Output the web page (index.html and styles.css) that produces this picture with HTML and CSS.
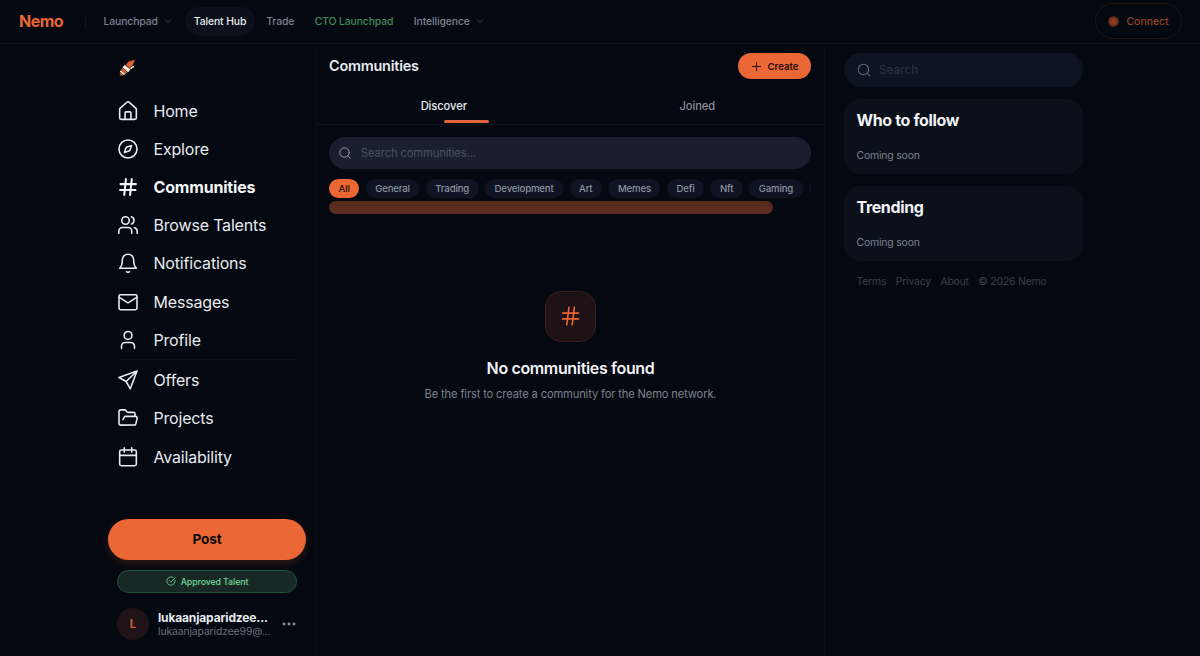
FILE: index.html
```
<!DOCTYPE html>
<html lang="en">

<head>
    <meta charset="UTF-8">
    <meta name="viewport" content="width=device-width, initial-scale=1.0">
    <title>Communities - Nemo</title>
    <link rel="stylesheet" href="styles.css">
</head>

<body>
    <header class="topbar">
        <a class="brand">Nemo</a>
        <span class="brand-line"></span>
        <nav class="topnav">
            <a class="top-link">Launchpad <svg class="chevron" viewBox="0 0 24 24"><path d="m6 9 6 6 6-6" /></svg></a>
            <a class="top-link active">Talent Hub</a>
            <a class="top-link">Trade</a>
            <a class="top-link green">CTO Launchpad</a>
            <a class="top-link">Intelligence <svg class="chevron" viewBox="0 0 24 24"><path d="m6 9 6 6 6-6" /></svg></a>
        </nav>
        <button class="connect"><span class="connect-dot"></span>Connect</button>
    </header>

    <div class="layout">
        <aside class="sidebar">
            <svg class="logo" viewBox="0 0 16 16">
                <path d="M7 5.500C8 2 11 .3 15.800.3 15 2.500 14.500 4.500 12 7L9 8Z" fill="#d9622f" />
                <path d="M.8 15.500 1 11.500 5 5.500 8 5 12.500 8.500 9 12 4 15.500Z" fill="#d9622f" />
                <path d="M3.500 7.200 5.800 5.300 11.500 9.600 9 12.300ZM.8 11.500 2.200 10.300 6.500 13.800 4.800 15ZM11 8 15.300 5.300 14.800 7.300 12 9.300Z" fill="#f6efec" />
                <path d="M3.300 7.300 8.800 12.500M2 10.200 6.300 14M6.500 5.200 12 9.200M.8 12.200 4.200 15.300" stroke="#1a1215" stroke-width=".6" />
            </svg>
            <nav class="menu">
                <a class="menu-item">
                    <svg class="icon" viewBox="0 0 24 24"><path d="M15.500 22v-8a1 1 0 0 0-1-1h-5a1 1 0 0 0-1 1v8" /><path d="M2 10a2 2 0 0 1 .709-1.528l8-7a2 2 0 0 1 2.582 0l8 7A2 2 0 0 1 22 10v10a2 2 0 0 1-2 2H4a2 2 0 0 1-2-2z" /></svg>
                    Home
                </a>
                <a class="menu-item">
                    <svg class="icon" viewBox="0 0 24 24"><circle cx="12" cy="12" r="10.800" /><path d="m16.240 7.760-1.804 5.411a2 2 0 0 1-1.265 1.265L7.760 16.240l1.804-5.411a2 2 0 0 1 1.265-1.265z" /></svg>
                    Explore
                </a>
                <a class="menu-item current">
                    <svg class="icon" viewBox="0 0 24 24"><path d="M3 8.500h18.500M2.500 15.500h18.500M9.500 2.500 7.500 21.500M16.500 2.500 14.500 21.500" /></svg>
                    Communities
                </a>
                <a class="menu-item">
                    <svg class="icon" viewBox="0 0 24 24"><path d="M16.500 22v-2.500a4.500 4.500 0 0 0-4.500-4.500H5.500a4.500 4.500 0 0 0-4.500 4.500V22" /><circle cx="9" cy="6.500" r="4.500" /><path d="M23 22v-2.500a4.500 4.500 0 0 0-3.300-4.300M16 2.200a4.500 4.500 0 0 1 0 8.600" /></svg>
                    Browse Talents
                </a>
                <a class="menu-item">
                    <svg class="icon" viewBox="0 0 24 24"><path d="M10.300 22.300a2 2 0 0 0 3.400 0" /><path d="M18.800 8.200a6.800 6.800 0 0 0-13.600 0C5.200 15.500 2 18.300 2 18.300h20s-3.200-2.800-3.200-10.100" /></svg>
                    Notifications
                </a>
                <a class="menu-item">
                    <svg class="icon" viewBox="0 0 24 24"><rect x="1.200" y="3.200" width="21.600" height="18" rx="2" /><path d="m1.500 6.500 10.500 6.500L22.500 6.500" /></svg>
                    Messages
                </a>
                <a class="menu-item">
                    <svg class="icon" viewBox="0 0 24 24"><path d="M19.800 22v-2.500a4.500 4.500 0 0 0-4.500-4.500H8.700a4.500 4.500 0 0 0-4.500 4.500V22" /><circle cx="12" cy="6.500" r="4.700" /></svg>
                    Profile
                </a>
                <hr class="menu-line">
                <a class="menu-item">
                    <svg class="icon" viewBox="0 0 24 24"><path d="M22.800 1.200 1.200 9l8.600 4.800 4.900 8.800zM22.800 1.200 9.800 13.800" /></svg>
                    Offers
                </a>
                <a class="menu-item">
                    <svg class="icon" viewBox="0 0 24 24"><path d="m6 14 1.500-2.900A2 2 0 0 1 9.240 10H21a2 2 0 0 1 1.940 2.500l-1.540 6.500a2 2 0 0 1-1.950 1.500H3.200a2 2 0 0 1-2-2V4.200a2 2 0 0 1 2-2h4.700a2 2 0 0 1 1.690.9l.81 1.200a2 2 0 0 0 1.670.9H18.500a2 2 0 0 1 2 2V10" /></svg>
                    Projects
                </a>
                <a class="menu-item">
                    <svg class="icon" viewBox="0 0 24 24"><path d="M7.500 1v5M16.500 1v5M2 10h20" /><rect x="2" y="3.500" width="20" height="19" rx="2" /></svg>
                    Availability
                </a>
            </nav>

            <button class="post">Post</button>
            <div class="approved">
                <svg viewBox="0 0 24 24"><path d="M21.800 10A10 10 0 1 1 17 3.335" /><path d="m8 11 4 4L22 4" /></svg>
                Approved Talent
            </div>
            <div class="account">
                <div class="avatar">L</div>
                <div class="account-text">
                    <div class="account-name">lukaanjaparidzee...</div>
                    <div class="account-mail">lukaanjaparidzee99@...</div>
                </div>
                <svg class="dots" viewBox="0 0 14 4"><circle cx="2" cy="2" r="1.400" /><circle cx="7" cy="2" r="1.400" /><circle cx="12" cy="2" r="1.400" /></svg>
            </div>
        </aside>

        <main class="main">
            <div class="main-head">
                <h1>Communities</h1>
                <button class="create"><svg viewBox="0 0 24 24"><path d="M3 12h18M12 3v18" /></svg>Create</button>
            </div>
            <div class="tabs">
                <div class="tab selected">Discover</div>
                <div class="tab">Joined</div>
            </div>
            <div class="filters">
                <div class="search">
                    <svg viewBox="0 0 24 24"><circle cx="11" cy="11" r="9.500" /><path d="m22.500 22.500-4.800-4.800" /></svg>
                    <span>Search communities...</span>
                </div>
                <div class="chips">
                    <span class="chip on">All</span>
                    <span class="chip">General</span>
                    <span class="chip">Trading</span>
                    <span class="chip">Development</span>
                    <span class="chip">Art</span>
                    <span class="chip">Memes</span>
                    <span class="chip">Defi</span>
                    <span class="chip">Nft</span>
                    <span class="chip">Gaming</span>
                    <span class="chip"></span>
                </div>
                <div class="scrollbar"></div>
            </div>
            <div class="empty">
                <div class="empty-icon">
                    <svg viewBox="0 0 24 24"><path d="M2 8.500h19M2 15.500h19M9.500 1.500 7 22.500M16 1.500 13.500 22.500" /></svg>
                </div>
                <h2>No communities found</h2>
                <p>Be the first to create a community for the Nemo network.</p>
            </div>
        </main>

        <aside class="right">
            <div class="side-search">
                <svg viewBox="0 0 24 24"><circle cx="11" cy="11" r="8.800" /><path d="m22 22-4.700-4.700" /></svg>
                <span>Search</span>
            </div>
            <section class="card">
                <h3>Who to follow</h3>
                <p>Coming soon</p>
            </section>
            <section class="card">
                <h3>Trending</h3>
                <p>Coming soon</p>
            </section>
            <footer class="links">
                <a>Terms</a>
                <a>Privacy</a>
                <a>About</a>
                <span>© 2026 Nemo</span>
            </footer>
        </aside>
    </div>
</body>

</html>
```
FILE: styles.css
```
* {
    box-sizing: border-box;
}

body {
    margin: 0;
    height: 100vh;
    overflow: hidden;
    background-color: #040810;
    color: #e8ebf0;
    font-family: Inter, "Liberation Sans", sans-serif;
}

h1,
h2,
h3,
p {
    margin: 0;
}

button {
    font-family: inherit;
    border: none;
    cursor: pointer;
}

svg {
    display: block;
    flex-shrink: 0;
    fill: none;
    stroke: currentColor;
    stroke-width: 2;
    stroke-linecap: round;
    stroke-linejoin: round;
}

/* top bar */
.topbar {
    height: 44px;
    display: flex;
    align-items: center;
    padding: 0 18.500px 1px 19px;
    border-bottom: 1px solid #0d1219;
}

.brand {
    width: 66px;
    font-size: 16px;
    font-weight: 700;
    letter-spacing: -0.5px;
    color: #ea6634;
}

.brand-line {
    width: 1px;
    height: 13px;
    background-color: #10151d;
}

.topnav {
    display: flex;
    align-items: center;
    gap: 1.500px;
    margin-left: 8px;
}

.top-link {
    height: 29px;
    display: flex;
    align-items: center;
    padding: 0 9.500px;
    border-radius: 15px;
    font-size: 10.400px;
    font-weight: 500;
    letter-spacing: -0.12px;
    color: #7d8390;
}

.top-link.active {
    padding: 0 9px;
    background-color: #0b101b;
    color: #e9ecf1;
}

.top-link.green {
    color: #418a59;
}

.chevron {
    width: 12px;
    height: 12px;
    margin-left: 4px;
    color: #373d47;
}

.connect {
    width: 87px;
    height: 36px;
    display: flex;
    align-items: center;
    gap: 8px;
    margin-left: auto;
    padding: 0 12px;
    border: 1px solid #26120f;
    border-radius: 18px;
    background: none;
    font-size: 10.400px;
    font-weight: 500;
    color: #9a4526;
}

.connect-dot {
    flex-shrink: 0;
    width: 11px;
    height: 11px;
    border-radius: 50%;
    background: radial-gradient(circle, #8b3b1d 35%, #3b1b14 75%);
}

/* three columns */
.layout {
    height: calc(100vh - 44px);
    display: grid;
    grid-template-columns: 208px 509px 258px;
    padding-left: 108px;
}

.sidebar {
    display: flex;
    flex-direction: column;
    padding: 16px 10px 0 0;
}

.logo {
    width: 16px;
    height: 16px;
    margin-left: 11px;
    stroke: none;
}

.menu {
    margin: 16px 0 0 9.500px;
}

.menu-item {
    height: 38.120px;
    display: flex;
    align-items: center;
    gap: 16px;
    font-size: 16px;
    letter-spacing: -0.18px;
}

.menu-item.current {
    font-weight: 700;
    color: #f3f5f8;
}

.menu-item.current .icon {
    stroke-width: 2.500;
}

.icon {
    width: 20px;
    height: 20px;
    stroke-width: 1.900;
}

.menu-line {
    width: 180px;
    height: 1px;
    margin: 0.500px 0 1px;
    border: none;
    background-color: #0d1219;
}

.post {
    height: 41px;
    margin-top: 43.500px;
    padding-bottom: 2px;
    border-radius: 21px;
    background-color: #eb6735;
    box-shadow: 0 3px 10px rgba(235, 103, 53, 0.2);
    font-size: 13.600px;
    font-weight: 700;
    letter-spacing: -0.1px;
    color: #080808;
}

.approved {
    width: 180px;
    height: 23px;
    display: flex;
    align-items: center;
    justify-content: center;
    gap: 5px;
    margin: 9.500px 0 0 9px;
    border: 1px solid #24553a;
    border-radius: 12px;
    background-color: #182925;
    font-size: 8.800px;
    font-weight: 500;
    letter-spacing: -0.1px;
    color: #72d996;
}

.approved svg {
    width: 10px;
    height: 10px;
}

.account {
    display: flex;
    align-items: center;
    margin: 15px 0 0 9px;
}

.avatar {
    width: 32px;
    height: 32px;
    line-height: 32px;
    border-radius: 50%;
    background-color: #201317;
    text-align: center;
    font-size: 11.200px;
    font-weight: 700;
    color: #d85c31;
}

.account-text {
    width: 114px;
    margin-left: 9px;
    white-space: nowrap;
}

.account-name {
    font-size: 12px;
    line-height: 15px;
    font-weight: 700;
    letter-spacing: -0.15px;
}

.account-mail {
    font-size: 10.400px;
    line-height: 13px;
    letter-spacing: -0.12px;
    color: #69717e;
}

.dots {
    width: 14px;
    height: 4px;
    margin-left: 10px;
    fill: #8b919c;
    stroke: none;
}

/* middle column */
.main {
    min-width: 0;
    border-left: 1px solid #0a0f17;
    border-right: 1px solid #0a0f17;
}

.main-head {
    height: 44px;
    display: flex;
    align-items: center;
    justify-content: space-between;
    padding: 0 13px 0 12px;
}

.main-head h1 {
    padding-bottom: 1px;
    font-size: 14.400px;
    font-weight: 600;
    letter-spacing: -0.2px;
}

.create {
    width: 73px;
    height: 26px;
    display: flex;
    align-items: center;
    justify-content: center;
    gap: 6px;
    border-radius: 13px;
    background-color: #eb6735;
    font-size: 9.600px;
    font-weight: 600;
    color: #1b0d09;
}

.create svg {
    width: 11px;
    height: 11px;
}

.tabs {
    height: 37px;
    display: flex;
    border-bottom: 1px solid #10151d;
}

.tab {
    flex: 1;
    line-height: 36px;
    text-align: center;
    font-size: 11.200px;
    font-weight: 500;
    letter-spacing: -0.1px;
    color: #868c98;
}

.tab.selected {
    position: relative;
    color: #e9ecf1;
}

.tab.selected::after {
    content: "";
    position: absolute;
    left: 50%;
    bottom: 1px;
    width: 45px;
    height: 3px;
    border-radius: 2px;
    background-color: #e1663a;
}

.filters {
    height: 102px;
    padding: 12px 13px 0 12px;
    border-bottom: 1px solid #070b13;
}

.search {
    height: 32px;
    display: flex;
    align-items: center;
    gap: 10px;
    padding-left: 10px;
    border-radius: 16px;
    background-color: #191f2f;
    font-size: 11.200px;
    letter-spacing: -0.12px;
    color: #4c5363;
}

.search svg {
    width: 12px;
    height: 12px;
    color: #969caa;
}

.chips {
    display: flex;
    gap: 6.500px;
    margin-top: 9.500px;
    overflow: hidden;
}

.chip {
    flex-shrink: 0;
    height: 19px;
    line-height: 19px;
    padding: 0 9.500px;
    border-radius: 10px;
    background-color: #0e1421;
    font-size: 9.600px;
    font-weight: 500;
    letter-spacing: -0.16px;
    color: #8d93a2;
}

.chip.on {
    background-color: #eb6735;
    color: #1b0d09;
}

.scrollbar {
    width: 444px;
    height: 13px;
    margin-top: 3px;
    border-radius: 7px;
    background-color: #592c1e;
}

.empty {
    display: flex;
    flex-direction: column;
    align-items: center;
    padding-top: 64px;
}

.empty-icon {
    width: 51px;
    height: 51px;
    display: flex;
    align-items: center;
    justify-content: center;
    border: 1px solid #3a1f1b;
    border-radius: 16px;
    background-color: #1e1216;
    color: #e56536;
}

.empty-icon svg {
    width: 20px;
    height: 20px;
    margin-bottom: 1px;
}

.empty h2 {
    margin-top: 16px;
    font-size: 16px;
    line-height: 20px;
    font-weight: 600;
    letter-spacing: -0.35px;
    color: #f1f3f6;
}

.empty p {
    margin-top: 8px;
    font-size: 11.200px;
    line-height: 16px;
    letter-spacing: -0.16px;
    color: #7b828f;
}

/* right column */
.right {
    padding: 9px 0 0 19px;
}

.side-search {
    height: 34px;
    display: flex;
    align-items: center;
    gap: 8px;
    padding: 0 0 1px 13px;
    border-radius: 17px;
    background-color: #0d1421;
    font-size: 12px;
    letter-spacing: -0.1px;
    color: #2d3441;
}

.side-search svg {
    width: 14px;
    height: 14px;
    color: #5d6471;
}

.card {
    height: 75px;
    margin-top: 12px;
    padding: 11px 12.500px;
    border-radius: 16px;
    background-color: #0b111b;
}

.card h3 {
    font-size: 16px;
    line-height: 20px;
    font-weight: 700;
    letter-spacing: -0.36px;
    color: #f1f3f6;
}

.card p {
    margin-top: 17px;
    font-size: 10.400px;
    line-height: 17px;
    letter-spacing: -0.16px;
    color: #7c828e;
}

.links {
    display: flex;
    gap: 9.500px;
    padding: 14px 12.500px;
    font-size: 10.400px;
    letter-spacing: -0.18px;
    color: #3c424d;
}
```
